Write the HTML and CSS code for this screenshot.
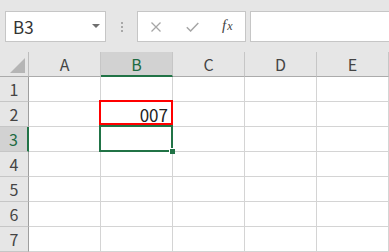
FILE: index.html
```html
<!DOCTYPE html>
<html lang="ja">
<head>
<meta charset="utf-8">
<title>Sheet</title>
<link rel="stylesheet" href="styles.css">
</head>
<body>
<div class="app">
  <div class="topbar">
    <div class="namebox">
      <span class="name">B3</span>
      <svg class="dd" width="8" height="4" viewBox="0 0 8 4"><polygon points="0,0 8,0 4,4" fill="#6f6f6f"/></svg>
    </div>
    <div class="grip"><i></i><i></i><i></i></div>
    <div class="fbtns">
      <div class="fbtn">
        <svg width="10" height="10" viewBox="0 0 10 10"><path d="M0.5 0.5 L9.5 9.5 M9.5 0.5 L0.5 9.5" stroke="#a6a6a6" stroke-width="1.3" fill="none"/></svg>
      </div>
      <div class="fbtn">
        <svg width="13" height="10" viewBox="0 0 13 10"><path d="M0.8 5.2 L4.6 9 L12.3 1" stroke="#a6a6a6" stroke-width="1.5" fill="none"/></svg>
      </div>
      <div class="fbtn fx">f<span class="fxx">x</span></div>
    </div>
    <div class="finput"></div>
  </div>
  <div class="sheet">
    <div class="corner"><svg width="15" height="15" viewBox="0 0 15 15"><polygon points="15,0 15,15 0,15" fill="#b5b5b5"/></svg></div>
    <div class="ch">A</div>
    <div class="ch sel">B</div>
    <div class="ch">C</div>
    <div class="ch">D</div>
    <div class="ch">E</div>

    <div class="rh">1</div><div class="c"></div><div class="c"></div><div class="c"></div><div class="c"></div><div class="c"></div>
    <div class="rh">2</div><div class="c"></div><div class="c val red">007</div><div class="c"></div><div class="c"></div><div class="c"></div>
    <div class="rh sel">3</div><div class="c"></div><div class="c active"><span class="handle"></span></div><div class="c"></div><div class="c"></div><div class="c"></div>
    <div class="rh">4</div><div class="c"></div><div class="c"></div><div class="c"></div><div class="c"></div><div class="c"></div>
    <div class="rh">5</div><div class="c"></div><div class="c"></div><div class="c"></div><div class="c"></div><div class="c"></div>
    <div class="rh">6</div><div class="c"></div><div class="c"></div><div class="c"></div><div class="c"></div><div class="c"></div>
    <div class="rh">7</div><div class="c"></div><div class="c"></div><div class="c"></div><div class="c"></div><div class="c"></div>
  </div>
</div>
</body>
</html>
```

FILE: styles.css
```css
* { box-sizing: border-box; }
html, body { margin: 0; padding: 0; background: #ffffff; }
body { font-family: "Noto Sans CJK JP", "Liberation Sans", sans-serif; overflow: hidden; }
.app { width: 389px; height: 252px; overflow: hidden; background: #fff; }

.topbar {
  height: 52px;
  background: #e6e6e6;
  display: flex;
  align-items: flex-start;
  padding: 11px 0 0 5px;
}
.namebox {
  width: 101px;
  height: 31px;
  background: #fff;
  border: 1px solid #c6c6c6;
  display: flex;
  align-items: center;
  justify-content: space-between;
  padding: 0 5px 0 7px;
}
.name { font-size: 17px; line-height: 1; color: #333; }
.dd { display: block; margin-bottom: 2px; }
.grip {
  width: 31px;
  height: 31px;
  display: flex;
  flex-direction: column;
  align-items: center;
  justify-content: center;
  gap: 2px;
}
.grip i { display: block; width: 2px; height: 2px; background: #a8a8a8; }
.fbtns {
  width: 109px;
  height: 31px;
  background: #fff;
  border: 1px solid #c6c6c6;
  display: flex;
  align-items: center;
}
.fbtn {
  width: 36px;
  height: 29px;
  display: flex;
  align-items: center;
  justify-content: center;
}
.fbtn svg { display: block; }
.fbtn:first-child { width: 37px; }
.fx {
  font-family: "Liberation Serif", "Times New Roman", serif;
  font-style: italic;
  font-size: 15px;
  color: #444;
  padding-bottom: 2px;
}
.fxx { font-size: 12px; position: relative; top: 1px; margin-left: 1px; }
.finput {
  flex: 1;
  height: 31px;
  margin-left: 4px;
  margin-right: -2px;
  background: #fff;
  border: 1px solid #c6c6c6;
}

.sheet {
  display: grid;
  grid-template-columns: 29px repeat(5, 72px);
  grid-template-rows: 25px repeat(7, 25px);
}
.corner {
  background: #e6e6e6;
  border-right: 1px solid #bdbdbd;
  border-bottom: 1px solid #ababab;
  display: flex;
  justify-content: flex-end;
  align-items: flex-end;
  padding: 0 3px 3px 0;
}
.corner svg { display: block; }
.ch {
  background: #e6e6e6;
  border-right: 1px solid #c6c6c6;
  border-bottom: 1px solid #ababab;
  display: flex;
  align-items: center;
  justify-content: center;
  font-size: 16px;
  line-height: 1;
  color: #444;
}
.ch.sel {
  background: #d2d2d2;
  color: #1e6b43;
  border-bottom: 2px solid #217346;
}
.rh {
  background: #e6e6e6;
  border-right: 1px solid #9e9e9e;
  border-bottom: 1px solid #c6c6c6;
  display: flex;
  align-items: center;
  justify-content: center;
  font-size: 16px;
  line-height: 1;
  color: #444;
}
.rh.sel {
  background: #d2d2d2;
  color: #1e6b43;
  border-right: 2px solid #217346;
}
.c {
  border-right: 1px solid #d4d4d4;
  border-bottom: 1px solid #d4d4d4;
  position: relative;
}
.val {
  display: flex;
  align-items: center;
  justify-content: flex-end;
  padding-right: 4px;
  font-size: 17px;
  line-height: 1;
  color: #222;
}
.red::after {
  content: "";
  position: absolute;
  left: -2px;
  top: -2px;
  right: -1px;
  bottom: 1px;
  border: 2px solid #ff0000;
  z-index: 3;
}
.active::before {
  content: "";
  position: absolute;
  left: -2px;
  top: -2px;
  right: -1px;
  bottom: -1px;
  border: 2px solid #217346;
  z-index: 2;
}
.handle {
  position: absolute;
  right: -3px;
  bottom: -3px;
  width: 6px;
  height: 6px;
  background: #217346;
  border-left: 1px solid #fff;
  border-top: 1px solid #fff;
  z-index: 4;
}
```
